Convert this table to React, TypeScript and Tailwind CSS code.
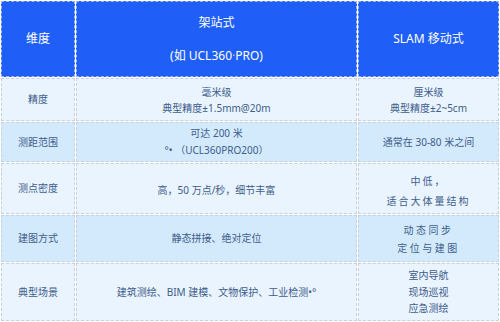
import React from "react";

const font = { fontFamily: '"Noto Sans", "Noto Sans CJK SC", sans-serif' };

function HeadCell({ children }: { children: React.ReactNode }) {
  return (
    <div className="flex flex-col items-center justify-center border border-dashed border-[#9fb8f2] bg-[#1f5ff8] text-[12px] text-white">
      {children}
    </div>
  );
}

function Cell({ dark, children, className = "" }: { dark?: boolean; children: React.ReactNode; className?: string }) {
  return (
    <div
      className={
        "flex flex-col items-center justify-center border border-dashed border-[#c5d0dc] text-center text-[10px] text-[#3f5d8a] " +
        (dark ? "bg-[#d3eafd] " : "bg-[#e9f4ff] ") +
        className
      }
    >
      {children}
    </div>
  );
}

export default function App() {
  return (
    <div
      style={font}
      className="grid h-[322px] w-[500px] grid-cols-[74px_281px_141px] grid-rows-[76px_43px_40px_51px_47px_58px] gap-px bg-white p-px"
    >
      <HeadCell>维度</HeadCell>
      <HeadCell>
        <span className="leading-[20px]">架站式</span>
        <span className="mt-[13px] leading-[20px]">
          (如 UCL360<span className="text-[#c9b89a]">·</span>PRO)
        </span>
      </HeadCell>
      <HeadCell>SLAM 移动式</HeadCell>

      <Cell>精度</Cell>
      <Cell className="leading-[16px]">
        <span>毫米级</span>
        <span>典型精度±1.5mm@20m</span>
      </Cell>
      <Cell className="leading-[16px]">
        <span>厘米级</span>
        <span>典型精度±2~5cm</span>
      </Cell>

      <Cell dark>测距范围</Cell>
      <Cell dark className="leading-[17px]">
        <span>可达 200 米</span>
        <span>°• （UCL360PRO200）</span>
      </Cell>
      <Cell dark className="text-[9px]">通常在 30-80 米之间</Cell>

      <Cell>测点密度</Cell>
      <Cell className="pt-1">高，50 万点/秒，细节丰富</Cell>
      <Cell className="pt-1 leading-[20px] tracking-[2px]">
        <span>中低，</span>
        <span>适合大体量结构</span>
      </Cell>

      <Cell dark>建图方式</Cell>
      <Cell dark>静态拼接、绝对定位</Cell>
      <Cell dark className="leading-[18px] tracking-[2.5px]">
        <span>动态同步</span>
        <span>定位与建图</span>
      </Cell>

      <Cell>典型场景</Cell>
      <Cell>建筑测绘、BIM 建模、文物保护、工业检测•°</Cell>
      <Cell className="leading-[16.5px]">
        <span>室内导航</span>
        <span>现场巡视</span>
        <span>应急测绘</span>
      </Cell>
    </div>
  );
}
